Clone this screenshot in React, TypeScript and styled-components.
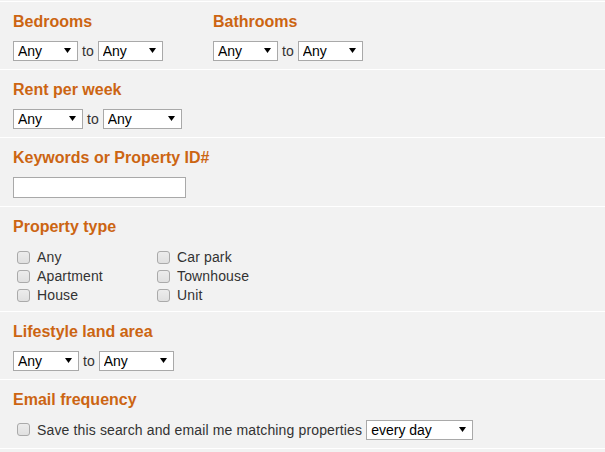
import React from "react";
import styled, { createGlobalStyle } from "styled-components";

const Global = createGlobalStyle`
  html, body { margin: 0; padding: 0; background: #f2f2f2; }
  body { font-family: "Liberation Sans", Arial, sans-serif; font-size: 14px; color: #333; }
`;

const Page = styled.div`
  padding-top: 1px;
  width: 605px;
`;

const Section = styled.section<{ $first?: boolean; $pb?: number }>`
  border-top: ${(p) => (p.$first ? "1px solid #fff" : "0")};
  border-bottom: 1px solid #fff;
  padding: 11px 13px ${(p) => p.$pb ?? 8}px;
`;

const Columns = styled.div`
  display: flex;
`;

const Column = styled.div`
  width: 200px;
`;

const Heading = styled.h3`
  margin: 0;
  font-size: 16px;
  line-height: 18px;
  font-weight: bold;
  color: #cc6512;
`;

const Controls = styled.div<{ $mt?: number }>`
  display: flex;
  align-items: center;
  margin-top: ${(p) => p.$mt ?? 10}px;
  height: 20px;
`;

const To = styled.span`
  margin: 0 4px;
  line-height: 20px;
  color: #333;
`;

const SelectWrap = styled.span`
  position: relative;
  display: inline-flex;
`;

const Select = styled.select<{ $w: number }>`
  appearance: none;
  -webkit-appearance: none;
  box-sizing: border-box;
  width: ${(p) => p.$w}px;
  height: 20px;
  margin: 0;
  padding: 0 14px 0 4px;
  border: 1px solid #a9a9a9;
  border-radius: 0;
  background: #fff;
  color: #000;
  font-family: "Liberation Sans", Arial, sans-serif;
  font-size: 14px;
  line-height: 18px;
  outline: none;
`;

const Arrow = styled.svg`
  position: absolute;
  right: 7px;
  top: 7px;
  width: 7px;
  height: 5px;
  pointer-events: none;
`;

const TextInput = styled.input`
  box-sizing: border-box;
  display: block;
  width: 173px;
  height: 21px;
  margin: 10px 0 0;
  padding: 0 4px;
  border: 1px solid #a9a9a9;
  background: #fff;
  font-family: "Liberation Sans", Arial, sans-serif;
  font-size: 14px;
`;

const CheckGrid = styled.div`
  display: grid;
  grid-template-columns: 140px 140px;
  grid-auto-flow: column;
  grid-template-rows: repeat(3, 19px);
  margin-top: 12px;
  padding-left: 4px;
`;

const CheckLabel = styled.label`
  display: flex;
  align-items: center;
  gap: 7px;
  line-height: 19px;
  letter-spacing: 0.14px;
  color: #333;
`;

const Box = styled.input`
  appearance: none;
  -webkit-appearance: none;
  box-sizing: border-box;
  width: 13px;
  height: 13px;
  margin: 0 0 1px;
  border: 1px solid #aaa;
  border-radius: 3px;
  background: linear-gradient(#ececec, #e0e0e0);
  flex: none;
`;

const EmailRow = styled.div`
  display: flex;
  align-items: center;
  margin-top: 11px;
  height: 20px;
  padding-left: 4px;
`;

const EmailText = styled.span`
  margin: 0 4px 0 7px;
  letter-spacing: 0.14px;
  color: #333;
`;

function Dropdown({ w, value }: { w: number; value: string }) {
  return (
    <SelectWrap>
      <Select $w={w} defaultValue={value}>
        <option>{value}</option>
      </Select>
      <Arrow viewBox="0 0 7 5">
        <path d="M0 0 H7 L3.5 5 Z" fill="#000" />
      </Arrow>
    </SelectWrap>
  );
}

function Range({ a, b, mt }: { a: number; b: number; mt?: number }) {
  return (
    <Controls $mt={mt}>
      <Dropdown w={a} value="Any" />
      <To>to</To>
      <Dropdown w={b} value="Any" />
    </Controls>
  );
}

function Check({ label }: { label: string }) {
  return (
    <CheckLabel>
      <Box type="checkbox" />
      {label}
    </CheckLabel>
  );
}

export default function App() {
  return (
    <Page>
      <Global />
      <Section $first>
        <Columns>
          <Column>
            <Heading>Bedrooms</Heading>
            <Range a={65} b={65} />
          </Column>
          <Column>
            <Heading>Bathrooms</Heading>
            <Range a={65} b={65} />
          </Column>
        </Columns>
      </Section>
      <Section>
        <Heading>Rent per week</Heading>
        <Range a={70} b={79} />
      </Section>
      <Section>
        <Heading>Keywords or Property ID#</Heading>
        <TextInput type="text" />
      </Section>
      <Section $pb={6}>
        <Heading>Property type</Heading>
        <CheckGrid>
          <Check label="Any" />
          <Check label="Apartment" />
          <Check label="House" />
          <Check label="Car park" />
          <Check label="Townhouse" />
          <Check label="Unit" />
        </CheckGrid>
      </Section>
      <Section>
        <Heading>Lifestyle land area</Heading>
        <Range a={66} b={75} />
      </Section>
      <Section>
        <Heading>Email frequency</Heading>
        <EmailRow>
          <Box type="checkbox" />
          <EmailText>Save this search and email me matching properties</EmailText>
          <Dropdown w={107} value="every day" />
        </EmailRow>
      </Section>
    </Page>
  );
}
